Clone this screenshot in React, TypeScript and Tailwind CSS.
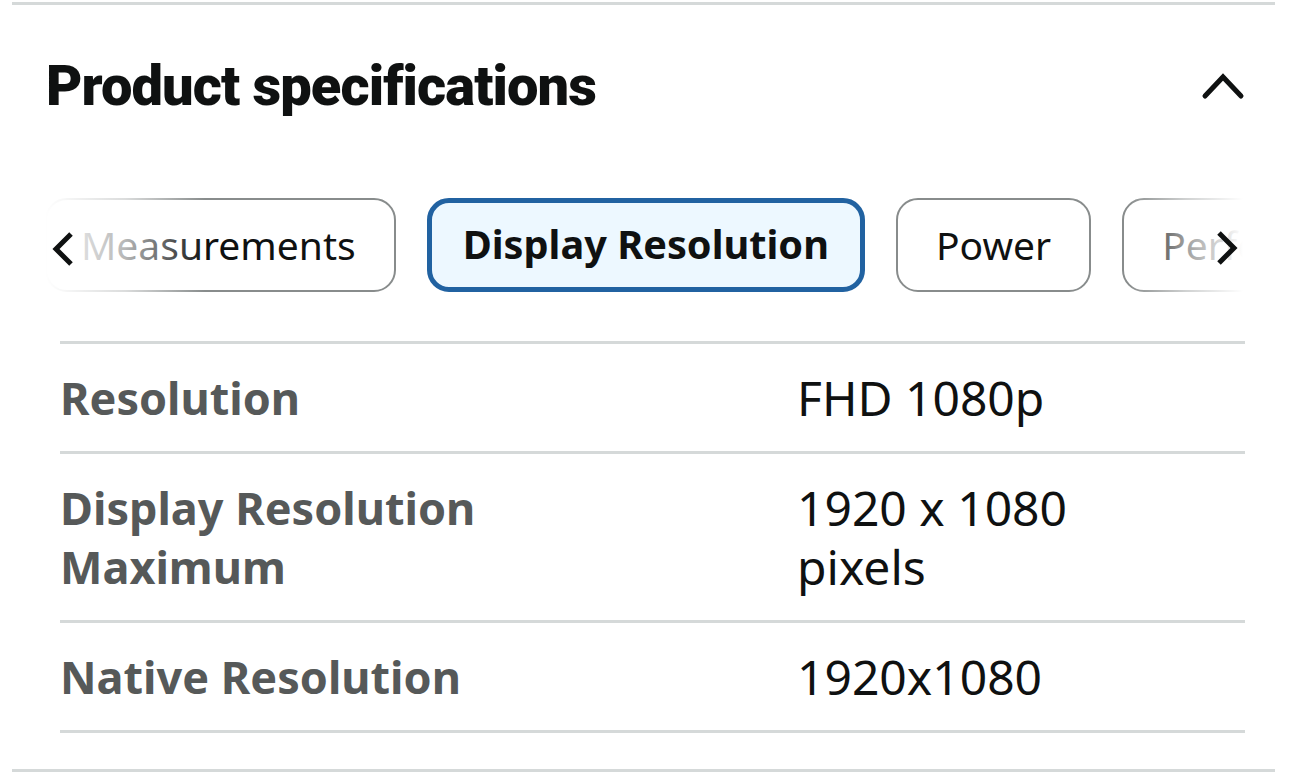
import React from "react";

const rows: { label: string[]; value: string[] }[] = [
  { label: ["Resolution"], value: ["FHD 1080p"] },
  { label: ["Display Resolution", "Maximum"], value: ["1920 x 1080", "pixels"] },
  { label: ["Native Resolution"], value: ["1920x1080"] },
];

function Tab({ text, active, pad }: { text: string; active?: boolean; pad?: string }) {
  if (active) {
    return (
      <div className="shrink-0 h-[94px] flex items-center px-[31px] rounded-[22px] border-[5px] border-[#2162a1] bg-[#edf8ff] text-[39.7px] font-bold text-[#0f1111] whitespace-nowrap">
        {text}
      </div>
    );
  }
  return (
    <div
      className={
        "shrink-0 h-[94px] flex items-center rounded-[22px] border-2 border-[#888c8c] bg-white text-[39px] text-[#0f1111] whitespace-nowrap " +
        (pad ?? "px-[38px]")
      }
    >
      {text}
    </div>
  );
}

export default function App() {
  return (
    <div
      className="w-[1290px] h-[782px] bg-white overflow-hidden"
      style={{ fontFamily: '"Noto Sans", "Open Sans", sans-serif' }}
    >
      <div className="ml-[12px] w-[1263px] mt-[2px] border-t-[3px] border-b-[3px] border-[#d5d9d9] pb-[36px]">
        {/* header */}
        <div className="h-[162px] flex items-center justify-between pl-[34px] pr-[30px]">
          <h2
            className="text-[56px] font-black text-[#0f1111] tracking-[-0.9px] leading-none"
            style={{ fontFamily: 'Roboto, "Liberation Sans", sans-serif' }}
          >
            Product specifications
          </h2>
          <svg width="44" height="30" viewBox="0 0 44 30">
            <polyline points="4,25 22,6 40,25" fill="none" stroke="#0f1111" strokeWidth="5" strokeLinecap="round" strokeLinejoin="miter" />
          </svg>
        </div>

        {/* tabs */}
        <div className="relative mt-[31px] ml-[33px] w-[1198px] overflow-hidden">
          <div className="flex gap-[31px]">
            <Tab text="Measurements" pad="pl-[34px] pr-[38px]" />
            <Tab text="Display Resolution" active />
            <Tab text="Power" />
            <Tab text="Performance" />
          </div>
          <div className="absolute inset-y-0 left-0 w-[160px] bg-gradient-to-r from-white via-white/70 to-white/0" />
          <div className="absolute inset-y-0 right-0 w-[115px] bg-gradient-to-l from-white via-white/60 to-white/0" />
          <svg width="26" height="40" viewBox="0 0 26 40" className="absolute left-[5px] top-[32px]">
            <polyline points="21,4 6,19 21,34" fill="none" stroke="#0f1111" strokeWidth="5" strokeLinejoin="miter" />
          </svg>
          <svg width="26" height="40" viewBox="0 0 26 40" className="absolute right-[3px] top-[31px]">
            <polyline points="5,4 20,19 5,34" fill="none" stroke="#0f1111" strokeWidth="5" strokeLinejoin="miter" />
          </svg>
        </div>

        {/* table */}
        <div className="mt-[49px] ml-[48px] mr-[30px] border-t-[3px] border-[#d5d9d9]">
          {rows.map((r, i) => (
            <div key={i} className="flex border-b-[3px] border-[#d5d9d9] py-[24px] leading-[59px]">
              <div className="w-[737px] pr-[180px] text-[45px] font-bold text-[#565959]">
                {r.label.map((l, j) => (
                  <div key={j}>{l}</div>
                ))}
              </div>
              <div className="w-[400px] text-[48px] text-[#0f1111]">
                {r.value.map((v, j) => (
                  <div key={j}>{v}</div>
                ))}
              </div>
            </div>
          ))}
        </div>
      </div>
    </div>
  );
}
